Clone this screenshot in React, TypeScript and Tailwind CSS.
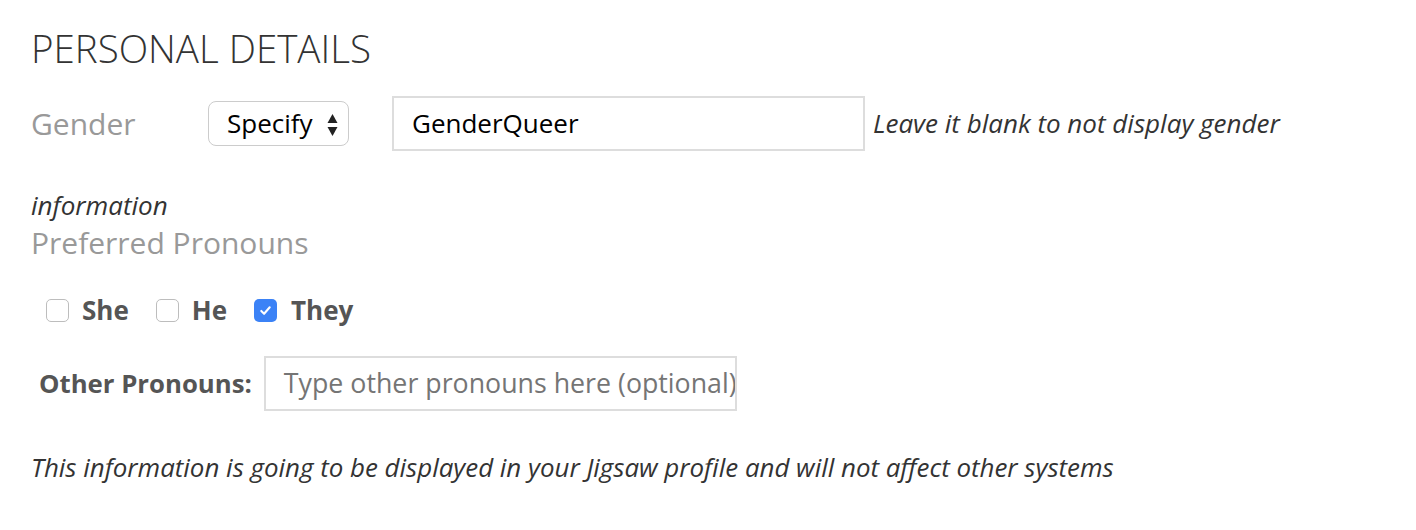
import React from "react";

function Check({ checked }: { checked?: boolean }) {
  return checked ? (
    <span className="inline-flex h-[23px] w-[23px] items-center justify-center rounded-[5px] bg-[#3b82f6]">
      <svg width="15" height="15" viewBox="0 0 16 16" fill="none">
        <path d="M3.5 8.5l3 3 6-7" stroke="white" strokeWidth="2.2" strokeLinecap="round" strokeLinejoin="round" />
      </svg>
    </span>
  ) : (
    <span className="inline-block h-[23px] w-[23px] rounded-[5px] border border-[#bdbdbd] bg-white" />
  );
}

export default function App() {
  return (
    <div className="bg-white w-[1416px] h-[530px] pl-[31px] pt-[26px] font-['Open_Sans','Liberation_Sans',sans-serif] text-[#333]">
      <h1 className="text-[38.5px] font-light leading-[44px] text-[#333]">PERSONAL DETAILS</h1>
      <div className="mt-[26px] flex items-center">
        <span className="w-[177px] text-[30px] leading-[36px] text-[#999]">Gender</span>
        <div className="flex h-[45px] w-[141px] items-center justify-between rounded-[8px] border border-[#ccc] pl-[18px] pr-[10px] text-[26px] text-black">
          <span>Specify</span>
          <svg width="11" height="24" viewBox="0 0 11 24">
            <path d="M5.5 2 L10.5 11 L0.5 11 Z" fill="#222" />
            <path d="M5.5 24 L10.5 15 L0.5 15 Z" fill="#222" />
          </svg>
        </div>
        <div className="ml-[43px] flex h-[55px] w-[473px] items-center border-2 border-[#ddd] pl-[18px] text-[26px] text-black">
          GenderQueer
        </div>
        <span className="ml-[8px] whitespace-nowrap text-[26px] italic text-[#333]">Leave it blank to not display gender</span>
      </div>
      <div className="mt-[39px] text-[26px] italic leading-[30px] text-[#333]">information</div>
      <div className="mt-[5px] text-[30px] leading-[36px] text-[#999]">Preferred Pronouns</div>
      <div className="mt-[31px] flex h-[36px] items-center pl-[15px] text-[26px] font-bold text-[#555]">
        <Check />
        <span className="ml-[13px]">She</span>
        <span className="ml-[27px] flex"><Check /></span>
        <span className="ml-[13px]">He</span>
        <span className="ml-[27px] flex"><Check checked /></span>
        <span className="ml-[14px]">They</span>
      </div>
      <div className="mt-[28px] flex items-center pl-[8px]">
        <span className="text-[25.75px] font-bold text-[#555]">Other Pronouns:</span>
        <div className="ml-[12px] flex h-[55px] w-[473px] items-center overflow-hidden whitespace-nowrap border-2 border-[#ddd] pl-[18px] pr-[2px] text-[26.75px] text-[#757575]">
          Type other pronouns here (optional)
        </div>
      </div>
      <div className="mt-[38px] text-[25.9px] leading-[36px] italic text-[#333]">
        This information is going to be displayed in your Jigsaw profile and will not affect other systems
      </div>
    </div>
  );
}
